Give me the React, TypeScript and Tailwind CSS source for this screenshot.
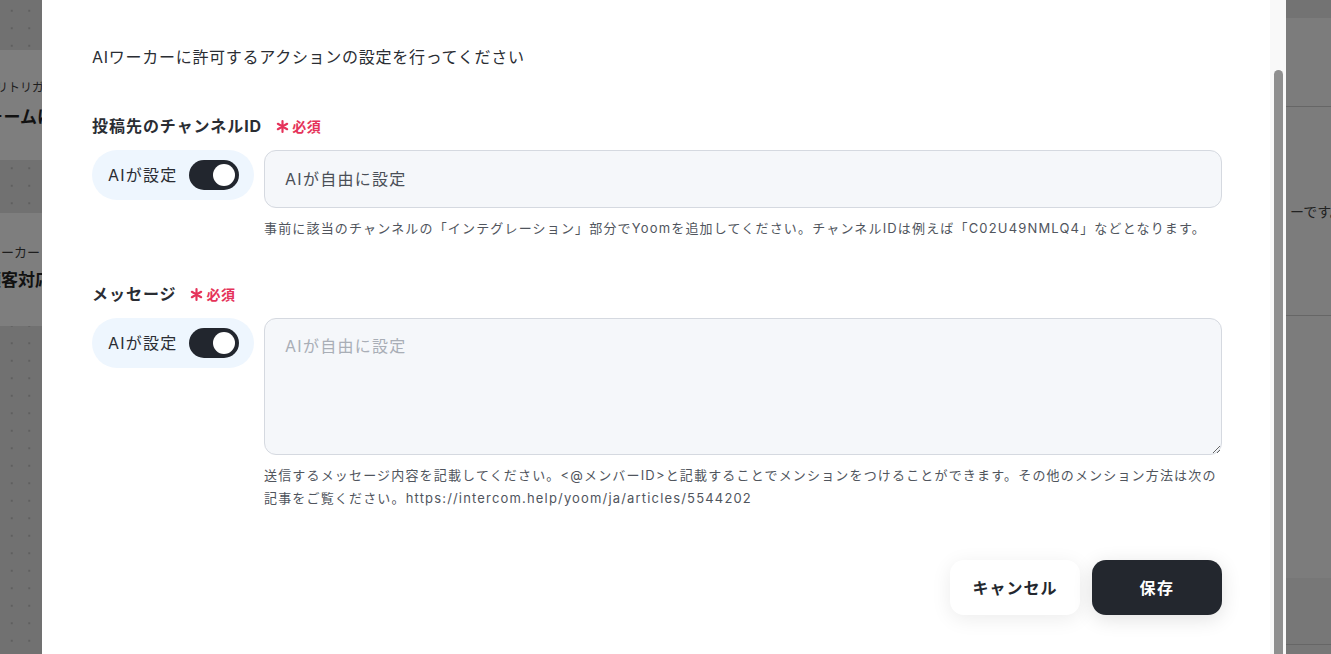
import type { ReactNode } from 'react';

const font = { fontFamily: '"Inter", "Noto Sans CJK JP", sans-serif' };

function Required() {
  return (
    <span className="ml-[14px] inline-flex items-center gap-[3px] text-[14px] font-bold tracking-[0.04em] text-[#e5335a]">
      <svg viewBox="0 0 12 12" className="w-[13px] h-[13px]" fill="none" stroke="currentColor" strokeWidth="2" strokeLinecap="round">
        <path d="M6 1v10M1.7 3.5l8.6 5M1.7 8.5l8.6-5" />
      </svg>
      必須
    </span>
  );
}

function AiToggle() {
  return (
    <div className="flex items-center shrink-0 w-[162px] h-[50px] rounded-full bg-[#eef6fe] pl-4 pr-[15px] justify-between">
      <span className="text-[16px] tracking-[0.075em] text-[#2a2d33]">AIが設定</span>
      <span className="flex items-center justify-end w-[50px] h-[30px] rounded-full bg-[#22262e] pr-[4px]">
        <span className="w-[22px] h-[22px] rounded-full bg-white" />
      </span>
    </div>
  );
}

function Field({ label, children, help }: { label: string; children: ReactNode; help: ReactNode }) {
  return (
    <div>
      <div className="flex items-center h-6">
        <span className="text-[16px] font-bold tracking-[0.06em] text-[#2a2d33]">{label}</span>
        <Required />
      </div>
      <div className="flex gap-[10px] mt-3">
        <AiToggle />
        <div className="flex-1">
          {children}
          <p className="mt-[9px] text-[13px] leading-[23px] tracking-[0.09em] text-[#50555d]">{help}</p>
        </div>
      </div>
    </div>
  );
}

function LeftEdge() {
  return (
    <div className="flex flex-col w-[48px] h-full">
      <div className="h-[50px]" />
      <div className="h-[110px] bg-[#7e7e7e] flex flex-col justify-center overflow-hidden">
        <div className="flex justify-end whitespace-nowrap text-[12px] text-[#1e1e1e] -mr-[8px]">ワークフローのトリトリガー</div>
        <div className="flex justify-end whitespace-nowrap text-[17px] font-bold text-[#111] mt-[8px] -mr-[6px]">お問い合わせフォームに</div>
      </div>
      <div className="h-[53px]" />
      <div className="h-[110px] bg-[#7e7e7e] flex flex-col justify-center overflow-hidden">
        <div className="flex justify-end whitespace-nowrap text-[13px] text-[#1e1e1e] pr-[8px]">AIワーカー</div>
        <div className="flex justify-end whitespace-nowrap text-[17px] font-bold text-[#111] mt-[6px] -mr-[4px]">顧客対応</div>
      </div>
      <div className="h-[3px] bg-[#7e7e7e]" />
    </div>
  );
}

function RightEdge() {
  return (
    <div className="flex flex-col w-[45px] h-full">
      <div className="h-[18px] bg-[#737373]" />
      <div className="h-[89px] bg-[#7c7c7c] border-b border-[#666]" />
      <div className="h-[209px] bg-[#7c7c7c] border-b border-[#666] flex items-center pl-[4px] whitespace-nowrap text-[14px] text-[#222]">
        ーです。
      </div>
      <div className="h-[262px] bg-[#7c7c7c]" />
      <div className="h-[67px] bg-[#777] border-b border-[#666]" />
      <div className="flex-1 bg-[#777]" />
    </div>
  );
}

export default function App() {
  return (
    <div
      className="relative h-[654px] w-full overflow-hidden bg-[#717171] bg-[radial-gradient(#5f5f5f_1.2px,transparent_1.3px)] bg-[size:17.5px_17.5px] bg-[position:3px_2px]"
      style={font}
    >
      <div className="flex justify-between h-full">
        <LeftEdge />
        <RightEdge />
      </div>

      {/* dialog */}
      <div className="absolute left-[42px] top-0 w-[1244px] h-[654px] bg-white flex">
        <div className="flex-1 pl-[50px] pr-[48px] pt-[45px]">
          <p className="text-[16px] leading-6 text-[#2a2d33] tracking-[0.045em]">AIワーカーに許可するアクションの設定を行ってください</p>

          <div className="mt-[45px]">
            <Field
              label="投稿先のチャンネルID"
              help="事前に該当のチャンネルの「インテグレーション」部分でYoomを追加してください。チャンネルIDは例えば「C02U49NMLQ4」などとなります。"
            >
              <div className="h-[58px] rounded-xl border border-[#d5d9e0] bg-[#f5f7fa] flex items-center px-5 text-[16px] tracking-[0.08em] text-[#4a4f57]">
                AIが自由に設定
              </div>
            </Field>
          </div>

          <div className="mt-[42px]">
            <Field
              label="メッセージ"
              help="送信するメッセージ内容を記載してください。<@メンバーID>と記載することでメンションをつけることができます。その他のメンション方法は次の記事をご覧ください。https://intercom.help/yoom/ja/articles/5544202"
            >
              <textarea
                placeholder="AIが自由に設定"
                className="block w-full h-[137px] rounded-xl border border-[#d5d9e0] bg-[#f5f7fa] px-5 py-[15px] text-[16px] tracking-[0.08em] text-[#4a4f57] placeholder:text-[#a9aeb6] outline-none resize-y"
                style={font}
              />
            </Field>
          </div>

          <div className="flex justify-end gap-3 mt-[50px]">
            <button className="w-[130px] h-[55px] rounded-[14px] bg-white text-[16px] font-bold tracking-[0.06em] text-[#23272e] shadow-[0_4px_20px_rgba(0,0,0,0.08)]">
              キャンセル
            </button>
            <button className="w-[130px] h-[55px] rounded-[14px] bg-[#23272e] text-[16px] font-bold tracking-[0.1em] text-white shadow-[0_4px_20px_rgba(0,0,0,0.12)]">
              保存
            </button>
          </div>
        </div>

        {/* scrollbar */}
        <div className="w-[16px] bg-[#f9f9f9] flex justify-center pt-[70px]">
          <div className="w-[9px] h-[640px] rounded-full bg-[#8f8f8f]" />
        </div>
      </div>
    </div>
  );
}
